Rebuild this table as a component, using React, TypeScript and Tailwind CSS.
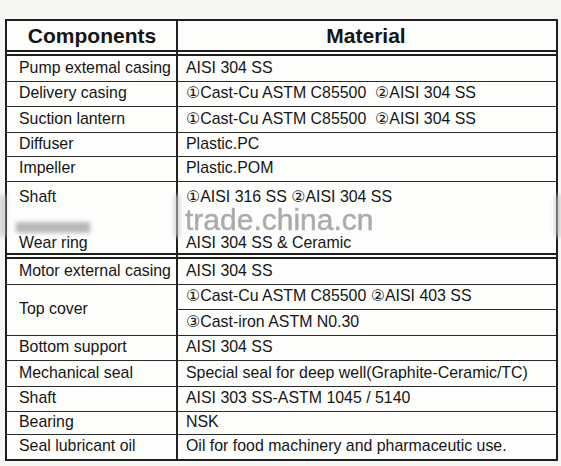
import React from "react";

const font = { fontFamily: '"Liberation Sans", Arial, "DejaVu Sans", sans-serif' };

type Row = { left: string; right: string; h: string };

const top: Row[] = [
  { left: "Pump extemal casing", right: "AISI 304 SS", h: "h-[26px]" },
  { left: "Delivery casing", right: "\u2460Cast-Cu ASTM C85500  \u2461AISI 304 SS", h: "h-[25px]" },
  { left: "Suction lantern", right: "\u2460Cast-Cu ASTM C85500  \u2461AISI 304 SS", h: "h-[26px]" },
  { left: "Diffuser", right: "Plastic.PC", h: "h-[24px]" },
  { left: "Impeller", right: "Plastic.POM", h: "h-[25px]" },
];

const bottom: Row[] = [
  { left: "Bottom support", right: "AISI 304 SS", h: "h-[25px]" },
  { left: "Mechanical seal", right: "Special seal for deep well(Graphite-Ceramic/TC)", h: "h-[26px]" },
  { left: "Shaft", right: "AISI 303 SS-ASTM 1045 / 5140", h: "h-[25px]" },
  { left: "Bearing", right: "NSK", h: "h-[23px]" },
  { left: "Seal lubricant oil", right: "Oil for food machinery and pharmaceutic use.", h: "h-[24px]" },
];

function TableRow({ r, last }: { r: Row; last?: boolean }) {
  return (
    <div className={`flex ${r.h} ${last ? "" : "border-b border-[#2a2a2a]"}`}>
      <div className="w-[171px] shrink-0 border-r-2 border-[#222] pl-[12px] flex items-center pb-[2px] whitespace-pre">
        {r.left}
      </div>
      <div className="flex-1 pl-[8px] flex items-center pb-[2px] whitespace-pre">{r.right}</div>
    </div>
  );
}

export default function App() {
  return (
    <div className="w-[561px] h-[466px] bg-[#f6f6f4] relative overflow-hidden" style={font}>
      <div className="pt-[19px] pl-[5px]">
        <div className="w-[553px] border-2 border-[#1e1e1e] bg-[#fdfdfc] text-[#151515] text-[15.9px] leading-none">
          {/* header */}
          <div className="flex h-[31px] border-b-2 border-[#1e1e1e]">
            <div className="w-[171px] shrink-0 border-r-2 border-[#222] flex items-center justify-center font-bold text-[21px] pl-[1px]">
              Components
            </div>
            <div className="flex-1 flex items-center justify-center font-bold text-[21px] pr-[2px]">Material</div>
          </div>
          <div className="flex h-[2px]">
            <div className="w-[171px] shrink-0 border-r-2 border-[#222]" />
            <div className="flex-1" />
          </div>
          <div className="border-t-2 border-[#1e1e1e]" />
          {top.map((r) => (
            <TableRow key={r.left} r={r} />
          ))}
          {/* shaft / wear ring */}
          <div className="flex h-[73px] border-b-2 border-[#1e1e1e]">
            <div className="w-[171px] shrink-0 border-r-2 border-[#222] pl-[12px] flex flex-col justify-between pt-[7px] pb-[2px]">
              <span>Shaft</span>
              <span>Wear ring</span>
            </div>
            <div className="flex-1 pl-[8px] flex flex-col justify-between pt-[7px] pb-[2px]">
              <span>{"\u2460AISI 316 SS \u2461AISI 304 SS"}</span>
              <span>AISI 304 SS &amp; Ceramic</span>
            </div>
          </div>
          <div className="flex h-[2px]">
            <div className="w-[171px] shrink-0 border-r-2 border-[#222]" />
            <div className="flex-1" />
          </div>
          <div className="border-t-2 border-[#1e1e1e]" />
          <TableRow r={{ left: "Motor external casing", right: "AISI 304 SS", h: "h-[26px]" }} />
          {/* top cover */}
          <div className="flex h-[51px] border-b border-[#2a2a2a]">
            <div className="w-[171px] shrink-0 border-r-2 border-[#222] pl-[12px] flex items-center pb-[2px]">
              Top cover
            </div>
            <div className="flex-1 flex flex-col">
              <div className="h-[25px] border-b border-[#2a2a2a] pl-[8px] flex items-center pb-[2px]">
                {"\u2460Cast-Cu ASTM C85500 \u2461AISI 403 SS"}
              </div>
              <div className="flex-1 pl-[8px] flex items-center pb-[2px]">{"\u2462Cast-iron ASTM N0.30"}</div>
            </div>
          </div>
          {bottom.map((r, i) => (
            <TableRow key={r.left + i} r={r} last={i === bottom.length - 1} />
          ))}
        </div>
      </div>

      {/* watermark overlays */}
      <div
        className="absolute left-[185px] top-[208px] text-[30px] leading-[24px] text-[#a2a2a2] opacity-90 pointer-events-none"
        style={{ ...font, WebkitTextStroke: "0.5px #a8a8a8" }}
      >
        trade.china.cn
      </div>
      <div className="absolute left-[16px] top-[222px] w-[74px] h-[11px] bg-[#8a8a8a] opacity-60 blur-[2px] pointer-events-none" />
      <div className="absolute left-0 top-[195px] w-[6px] h-[42px] bg-[#bdbdbd] opacity-70 blur-[2px] pointer-events-none" />
      <div className="absolute left-[174px] top-[195px] w-[6px] h-[42px] bg-[#c4c4c4] opacity-70 blur-[2px] pointer-events-none" />
      <div className="absolute left-[555px] top-[195px] w-[6px] h-[42px] bg-[#bdbdbd] opacity-70 blur-[2px] pointer-events-none" />
    </div>
  );
}
